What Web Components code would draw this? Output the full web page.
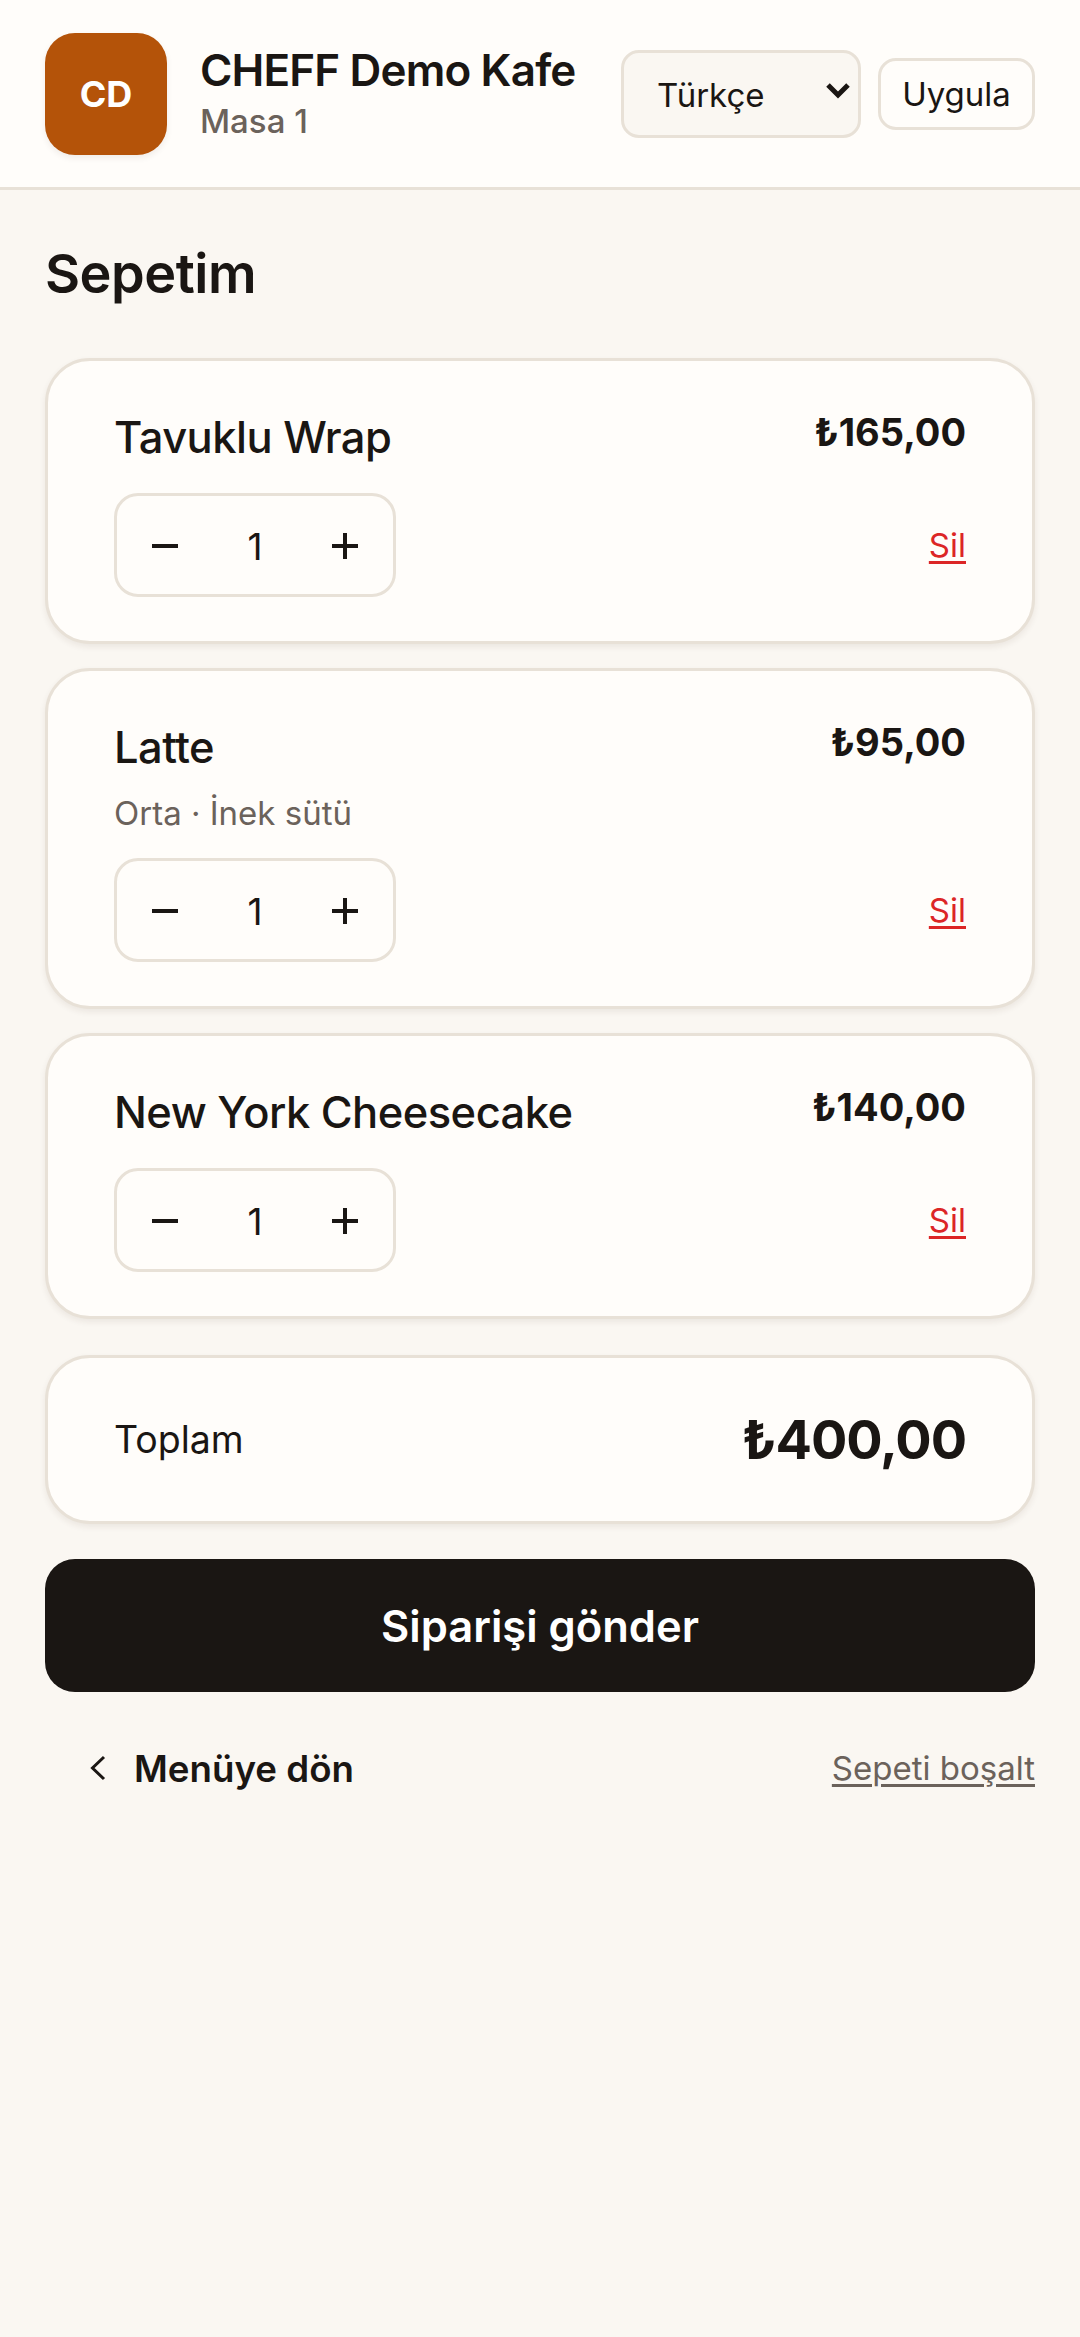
<!DOCTYPE html>
<html lang="tr">
<head>
<meta charset="utf-8">
<title>Sepetim</title>
<style>
  html, body { margin: 0; padding: 0; background: #faf7f2; }
  body { font-family: Inter, "Noto Sans", sans-serif; color: #1a1613; min-height: 2337px; }
  main { display: flex; flex-direction: column; padding: 0 45px; }
</style>
</head>
<body>
<app-header></app-header>
<main>
  <page-title>Sepetim</page-title>
  <cart-list>
    <cart-item price="₺165,00">Tavuklu Wrap</cart-item>
    <cart-item price="₺95,00" note="Orta · İnek sütü">Latte</cart-item>
    <cart-item price="₺140,00">New York Cheesecake</cart-item>
  </cart-list>
  <cart-total amount="₺400,00">Toplam</cart-total>
  <submit-button>Siparişi gönder</submit-button>
  <cart-footer></cart-footer>
</main>
<script>
class AppHeader extends HTMLElement {
    connectedCallback() {
        this.attachShadow({ mode: 'open' });
        this.shadowRoot.innerHTML = `
            <style>
                :host {
                    display: flex;
                    align-items: center;
                    height: 187px;
                    padding: 0 45px;
                    background: #fffdfa;
                    border-bottom: 3px solid #e8e1d7;
                }
                .logo {
                    flex: none;
                    width: 122px;
                    height: 122px;
                    border-radius: 30px;
                    background: #b45309;
                    color: #fff;
                    display: flex;
                    align-items: center;
                    justify-content: center;
                    font-size: 36px;
                    font-weight: 700;
                    box-shadow: 0 3px 6px rgba(60,40,20,0.08);
                }
                .info { margin-left: 33px; flex: 1; min-width: 0; }
                .name { font-size: 44px; line-height: 54px; font-weight: 600; letter-spacing: -0.85px; white-space: nowrap; }
                .table { font-size: 33px; line-height: 46px; font-weight: 500; color: #6b625b; margin-top: 1px; }
                .lang {
                    position: relative;
                    flex: none;
                    width: 240px;
                    height: 88px;
                    box-sizing: border-box;
                }
                select {
                    appearance: none;
                    width: 100%;
                    height: 100%;
                    box-sizing: border-box;
                    border: 3px solid #e8e1d7;
                    border-radius: 18px;
                    background: #faf7f2;
                    color: #1a1613;
                    font: 400 33px Inter, sans-serif;
                    padding: 3px 0 0 33px;
                }
                .lang svg { position: absolute; right: 10px; top: 31px; }
                button {
                    flex: none;
                    margin-left: 17px;
                    width: 157px;
                    height: 72px;
                    box-sizing: border-box;
                    border: 3px solid #e8e1d7;
                    border-radius: 18px;
                    background: #fffdfa;
                    color: #1a1613;
                    font: 400 33px Inter, sans-serif;
                    padding: 0;
                }
            </style>
            <div class="logo">CD</div>
            <div class="info">
                <div class="name">CHEFF Demo Kafe</div>
                <div class="table">Masa 1</div>
            </div>
            <div class="lang">
                <select aria-label="Dil"><option>Türkçe</option></select>
                <svg width="26" height="20" viewBox="0 0 26 20" fill="none" aria-hidden="true"><path d="M3 4l10 10L23 4" stroke="#1a1613" stroke-width="5"/></svg>
            </div>
            <button>Uygula</button>
        `;
    }
}

class PageTitle extends HTMLElement {
    connectedCallback() {
        this.attachShadow({ mode: 'open' });
        this.shadowRoot.innerHTML = `
            <style>
                :host {
                    display: block;
                    padding: 51px 0 51px;
                    font-size: 54px;
                    line-height: 66px;
                    font-weight: 600;
                    letter-spacing: -0.5px;
                }
            </style>
            <slot></slot>
        `;
    }
}

class CartList extends HTMLElement {
    connectedCallback() {
        this.attachShadow({ mode: 'open' });
        this.shadowRoot.innerHTML = `
            <style>
                :host { display: flex; flex-direction: column; gap: 24px; }
            </style>
            <slot></slot>
        `;
    }
}

class CartItem extends HTMLElement {
    connectedCallback() {
        const note = this.getAttribute('note');
        this.attachShadow({ mode: 'open' });
        this.shadowRoot.innerHTML = `
            <style>
                :host {
                    display: block;
                    box-sizing: border-box;
                    padding: 45px 66px 44px;
                    background: #fffdfa;
                    border: 3px solid #e8e1d7;
                    border-radius: 45px;
                    box-shadow: 0 3px 6px rgba(60,40,20,0.08);
                }
                .top { display: flex; justify-content: space-between; align-items: flex-start; }
                .name { font-size: 43.5px; line-height: 63px; font-weight: 500; letter-spacing: -0.54px; }
                .price { font-size: 38px; line-height: 52px; font-weight: 700; }
                .note { font-size: 33px; line-height: 48px; color: #6b625b; margin-top: 10px; }
                .bottom { display: flex; justify-content: space-between; align-items: center; margin-top: ${note ? 21 : 24}px; }
                a { font-size: 33px; color: #dc2626; text-decoration: underline; text-underline-offset: 4px; }
            </style>
            <div class="top">
                <div>
                    <div class="name"><slot></slot></div>
                    ${note ? `<div class="note">${note}</div>` : ''}
                </div>
                <div class="price">${this.getAttribute('price')}</div>
            </div>
            <div class="bottom">
                <qty-stepper value="1"></qty-stepper>
                <a href="#sil">Sil</a>
            </div>
        `;
    }
}

class QtyStepper extends HTMLElement {
    connectedCallback() {
        this.attachShadow({ mode: 'open' });
        this.shadowRoot.innerHTML = `
            <style>
                :host {
                    display: grid;
                    grid-template-columns: repeat(3, 1fr);
                    align-items: center;
                    box-sizing: border-box;
                    width: 282px;
                    height: 104px;
                    padding: 2px 3px 0;
                    border: 3px solid #e8e1d7;
                    border-radius: 24px;
                }
                span, button { text-align: center; font: 400 37px Inter, sans-serif; color: #1a1613; }
                button { display: flex; justify-content: center; background: none; border: 0; padding: 0; }
            </style>
            <button aria-label="Azalt"><svg width="28" height="28" viewBox="0 0 28 28" aria-hidden="true"><path d="M1 14h26" stroke="#1a1613" stroke-width="4"/></svg></button>
            <span>${this.getAttribute('value')}</span>
            <button aria-label="Artır"><svg width="28" height="28" viewBox="0 0 28 28" aria-hidden="true"><path d="M1 14h26M14 1v26" stroke="#1a1613" stroke-width="4"/></svg></button>
        `;
    }
}

class CartTotal extends HTMLElement {
    connectedCallback() {
        this.attachShadow({ mode: 'open' });
        this.shadowRoot.innerHTML = `
            <style>
                :host {
                    display: flex;
                    justify-content: space-between;
                    align-items: center;
                    box-sizing: border-box;
                    height: 169px;
                    margin-top: 36px;
                    padding: 0 66px;
                    background: #fffdfa;
                    border: 3px solid #e8e1d7;
                    border-radius: 45px;
                    box-shadow: 0 3px 6px rgba(60,40,20,0.08);
                }
                .label { font-size: 37.5px; }
                .amount { font-size: 54px; font-weight: 700; letter-spacing: -1.1px; }
            </style>
            <div class="label"><slot></slot></div>
            <div class="amount">${this.getAttribute('amount')}</div>
        `;
    }
}

class SubmitButton extends HTMLElement {
    connectedCallback() {
        this.attachShadow({ mode: 'open' });
        this.shadowRoot.innerHTML = `
            <style>
                :host { display: block; margin-top: 35px; }
                button {
                    display: block;
                    width: 100%;
                    height: 133px;
                    border: 0;
                    border-radius: 30px;
                    background: #1a1613;
                    color: #fff;
                    font: 600 43.5px Inter, sans-serif;
                }
            </style>
            <button><slot></slot></button>
        `;
    }
}

class CartFooter extends HTMLElement {
    connectedCallback() {
        this.attachShadow({ mode: 'open' });
        this.shadowRoot.innerHTML = `
            <style>
                :host {
                    display: flex;
                    justify-content: space-between;
                    align-items: center;
                    margin-top: 51px;
                    height: 50px;
                }
                .back {
                    display: flex;
                    align-items: center;
                    gap: 27px;
                    padding-left: 44px;
                    font-size: 36.7px;
                    font-weight: 600;
                    color: #1a1613;
                    text-decoration: none;
                }
                .clear { font-size: 33px; color: #6b625b; text-decoration: underline; text-underline-offset: 4px; }
            </style>
            <a class="back" href="#menu">
                <svg width="18" height="26" viewBox="0 0 18 26" fill="none" aria-hidden="true"><path d="M15 2L3.5 13 15 24" stroke="#1a1613" stroke-width="3"/></svg>
                Menüye dön
            </a>
            <a class="clear" href="#bosalt">Sepeti boşalt</a>
        `;
    }
}

customElements.define('app-header', AppHeader);
customElements.define('page-title', PageTitle);
customElements.define('cart-list', CartList);
customElements.define('cart-item', CartItem);
customElements.define('qty-stepper', QtyStepper);
customElements.define('cart-total', CartTotal);
customElements.define('submit-button', SubmitButton);
customElements.define('cart-footer', CartFooter);
</script>
</body>
</html>
